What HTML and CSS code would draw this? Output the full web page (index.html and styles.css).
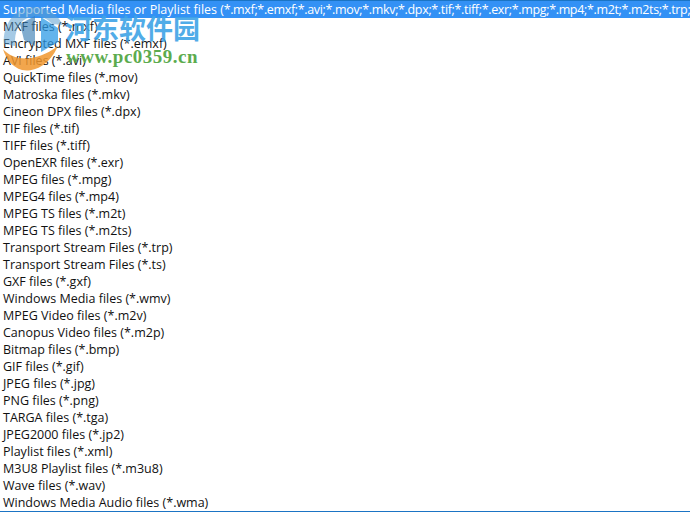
FILE: index.html
```html
<!DOCTYPE html>
<html lang="en">
<head>
  <meta charset="UTF-8" />
  <title>File types</title>
  <link rel="stylesheet" href="styles.css">
</head>
<body>
  <div class="dropdown">
    <ul class="file-list">
      <li class="selected">Supported Media files or Playlist files <span class="exts">(*.mxf;*.emxf;*.avi;*.mov;*.mkv;*.dpx;*.tif;*.tiff;*.exr;*.mpg;*.mp4;*.m2t;*.m2ts;*.trp;*.</span></li>
      <li>MXF files (*.mxf)</li>
      <li>Encrypted MXF files (*.emxf)</li>
      <li>AVI files (*.avi)</li>
      <li>QuickTime files (*.mov)</li>
      <li>Matroska files (*.mkv)</li>
      <li>Cineon DPX files (*.dpx)</li>
      <li>TIF files (*.tif)</li>
      <li>TIFF files (*.tiff)</li>
      <li>OpenEXR files (*.exr)</li>
      <li>MPEG files (*.mpg)</li>
      <li>MPEG4 files (*.mp4)</li>
      <li>MPEG TS files (*.m2t)</li>
      <li>MPEG TS files (*.m2ts)</li>
      <li>Transport Stream Files (*.trp)</li>
      <li>Transport Stream Files (*.ts)</li>
      <li>GXF files (*.gxf)</li>
      <li>Windows Media files (*.wmv)</li>
      <li>MPEG Video files (*.m2v)</li>
      <li>Canopus Video files (*.m2p)</li>
      <li>Bitmap files (*.bmp)</li>
      <li>GIF files (*.gif)</li>
      <li>JPEG files (*.jpg)</li>
      <li>PNG files (*.png)</li>
      <li>TARGA files (*.tga)</li>
      <li>JPEG2000 files (*.jp2)</li>
      <li>Playlist files (*.xml)</li>
      <li>M3U8 Playlist files (*.m3u8)</li>
      <li>Wave files (*.wav)</li>
      <li>Windows Media Audio files (*.wma)</li>
    </ul>
  </div>

  <!-- site watermark sits over the list -->
  <div class="watermark">
    <svg class="wm-logo" width="70" height="75" viewBox="0 0 70 75">
      <path d="M4 44C2 22 18 6 36 7C48 8 58 15 63 25L52 24C46 17 38 15 30 17C20 20 14 30 15 46Z" fill="#5b9fd0" opacity="0.55"/>
      <path d="M20 24L35 16V46L24 40Z" fill="#3c7fb5" opacity="0.65"/>
      <path d="M41 17L58 28V42L41 52Z" fill="#2f9be6" opacity="0.75"/>
      <path d="M3 49C12 60 34 64 58 46C48 68 32 72 22 70C12 67 6 59 3 49Z" fill="#f0962e" opacity="0.85"/>
    </svg>
    <div class="wm-name">河东软件园</div>
    <div class="wm-url">www.pc0359.cn</div>
  </div>
</body>
</html>
```

FILE: styles.css
```css
html, body {
  margin: 0;
  padding: 0;
}

body {
  position: relative;
  width: 690px;
  height: 512px;
  overflow: hidden;
  background: #fff;
}

.dropdown {
  height: 510px;
  border-top: 1px solid #1b74c4;
  border-bottom: 1px solid #1b74c4;
  overflow: hidden;
}

.file-list {
  list-style: none;
  margin: 0;
  padding: 0;
  font-family: "Open Sans", sans-serif;
  font-size: 12.5px;
  color: #111;
}

.file-list li {
  height: 17px;
  line-height: 17px;
  padding-left: 3px;
  white-space: nowrap;
}

.file-list .selected {
  background: #3391f5;
  color: #fff;
}

.exts {
  letter-spacing: -0.34px;
}

.watermark {
  position: absolute;
  left: 0;
  top: 0;
  width: 210px;
  height: 80px;
  pointer-events: none;
}

.wm-logo {
  position: absolute;
  left: 0;
  top: 0;
}

.wm-name {
  position: absolute;
  left: 65px;
  top: 10px;
  font-family: "Noto Sans CJK SC", sans-serif;
  font-size: 27px;
  line-height: 36px;
  font-weight: 700;
  color: #3fa4e6;
  opacity: 0.9;
  white-space: nowrap;
}

.wm-url {
  position: absolute;
  left: 66px;
  top: 47px;
  font-family: "Liberation Serif", serif;
  font-size: 19px;
  line-height: 20px;
  font-weight: 700;
  letter-spacing: 0.5px;
  color: #5cab4e;
  white-space: nowrap;
}
```
